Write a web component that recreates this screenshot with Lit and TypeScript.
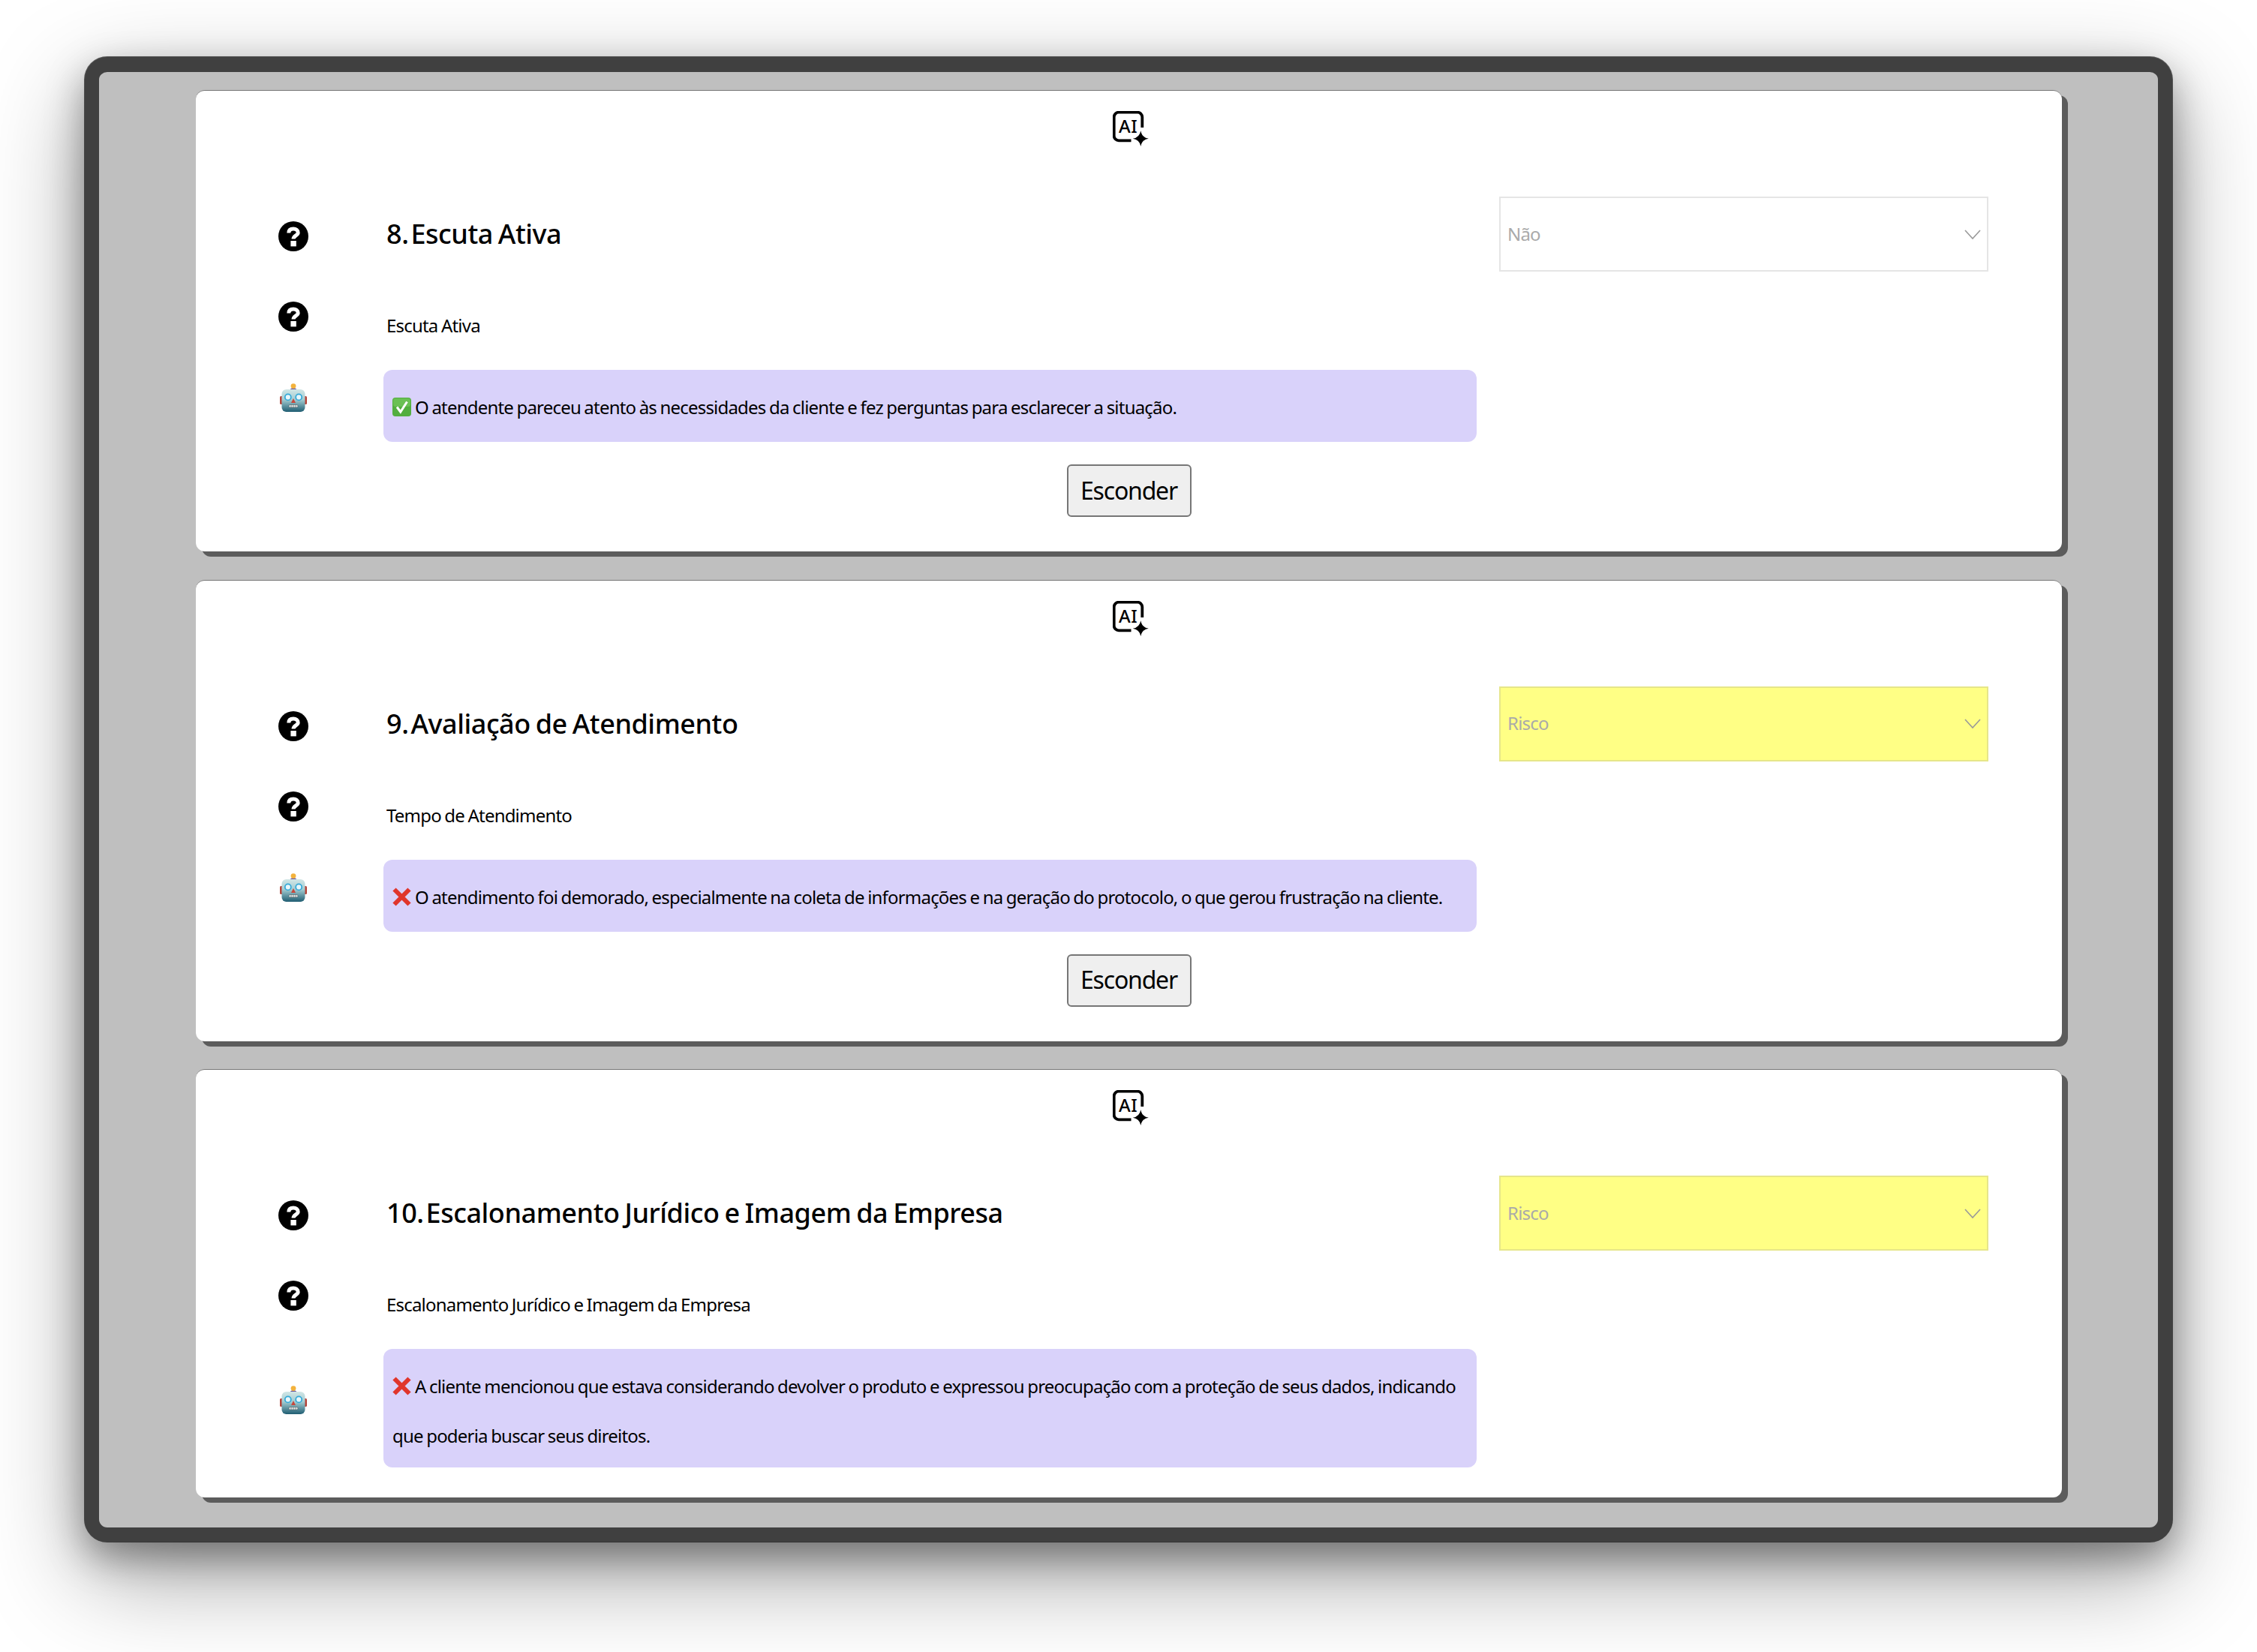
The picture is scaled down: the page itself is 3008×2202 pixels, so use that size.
import { LitElement, html, css, svg } from "lit";
import { customElement } from "lit/decorators.js";

interface Section {
  num: string;
  title: string;
  label: string;
  mark: "ok" | "no";
  text: string;
  value: string;
  risk: boolean;
  hide: boolean;
}

const sections: Section[] = [
  {
    num: "8.",
    title: "Escuta Ativa",
    label: "Escuta Ativa",
    mark: "ok",
    text: "O atendente pareceu atento às necessidades da cliente e fez perguntas para esclarecer a situação.",
    value: "Não",
    risk: false,
    hide: true,
  },
  {
    num: "9.",
    title: "Avaliação de Atendimento",
    label: "Tempo de Atendimento",
    mark: "no",
    text: "O atendimento foi demorado, especialmente na coleta de informações e na geração do protocolo, o que gerou frustração na cliente.",
    value: "Risco",
    risk: true,
    hide: true,
  },
  {
    num: "10.",
    title: "Escalonamento Jurídico e Imagem da Empresa",
    label: "Escalonamento Jurídico e Imagem da Empresa",
    mark: "no",
    text: "A cliente mencionou que estava considerando devolver o produto e expressou preocupação com a proteção de seus dados, indicando que poderia buscar seus direitos.",
    value: "Risco",
    risk: true,
    hide: false,
  },
];

const aiIcon = html`<svg class="ai" viewBox="0 0 48 47" width="48" height="47">
  <path d="M24.5 39.3H8A6.3 6.3 0 0 1 1.7 33V8A6.3 6.3 0 0 1 8 1.7H33A6.3 6.3 0 0 1 39.3 8V22" fill="none" stroke="#000" stroke-width="3.8" />
  <text x="8" y="29" font-size="24" font-weight="500" letter-spacing="0.5" font-family="Noto Sans, sans-serif">AI</text>
  <path d="M37.3 26.2Q38.8 35.2 47.8 36.7Q38.8 38.2 37.3 47Q35.8 38.2 26.8 36.7Q35.8 35.2 37.3 26.2Z" />
</svg>`;

const helpIcon = html`<svg viewBox="0 0 40 40" width="40" height="40">
  <circle cx="20" cy="20" r="20" />
  <path d="M13.8 15.5C13.8 11.5 16.6 10 20 10C23.6 10 26.2 12 26.2 15.2C26.2 18.8 20 19 20 23.5" fill="none" stroke="#fff" stroke-width="5" />
  <rect x="16.4" y="26" width="7.4" height="7.4" fill="#fff" />
</svg>`;

const robotIcon = html`<svg viewBox="0 0 36 38" width="36" height="38">
  <defs>
    <linearGradient id="head" x1="0" y1="0" x2="0" y2="1">
      <stop offset="0" stop-color="#d2e6e6" />
      <stop offset="0.45" stop-color="#a3cdd2" />
      <stop offset="1" stop-color="#1f5d72" />
    </linearGradient>
  </defs>
  <rect x="0" y="17" width="4" height="11" rx="1.5" fill="#b5443a" />
  <rect x="32" y="17" width="4" height="11" rx="1.5" fill="#b5443a" />
  <path d="M14 8C14 5.5 22 5.5 22 8V9H14Z" fill="#6a5a9c" />
  <circle cx="18" cy="3.6" r="3.4" fill="#f3b23c" />
  <rect x="2.5" y="8" width="31" height="30" rx="6" fill="url(#head)" />
  <circle cx="10.8" cy="18.4" r="4" fill="#e8f7fb" stroke="#35a9d8" stroke-width="1.8" />
  <circle cx="25.2" cy="18.4" r="4" fill="#e8f7fb" stroke="#35a9d8" stroke-width="1.8" />
  <path d="M18 20L21 26H15Z" fill="#c8483c" />
  <rect x="12" y="28.5" width="12" height="3.6" rx="1.6" fill="#dfe6e6" stroke="#4a5a60" stroke-width="0.6" />
  <path d="M15 28.5V32M18 28.5V32M21 28.5V32" stroke="#4a5a60" stroke-width="0.6" />
</svg>`;

const okMark = svg`<rect width="25" height="25" rx="4" fill="#52ae3f" /><rect x="1" y="1" width="23" height="11" rx="3" fill="#7ccb62" opacity="0.6" />
  <path d="M6 12.5L10.8 19L19.5 5.5" fill="none" stroke="#fff" stroke-width="3" />`;
const noMark = svg`<path d="M2.5 2.5L22.5 22.5M22.5 2.5L2.5 22.5" fill="none" stroke="#e0352b" stroke-width="6" />`;

@customElement("app-root")
export class AppRoot extends LitElement {
  static styles = css`
    :host {
      display: block;
      font-family: "Noto Sans", sans-serif;
      color: #000;
      padding: 76px 113px 148px;
      background: #fff;
    }
    .frame {
      border: 19px solid #404040;
      border-top-width: 20px;
      border-radius: 30px;
      background: #bfbfbf;
      padding: 24px 128px 40px 129px;
      box-shadow: 0 20px 50px rgba(0, 0, 0, 0.36), 0 44px 130px rgba(0, 0, 0, 0.38), 0 0 0 1px rgba(0, 0, 0, 0.6);
    }
    .card {
      background: #fff;
      border-top: 1px solid #777;
      border-radius: 12px;
      box-shadow: 8px 7px 0 #5c5c5c;
      padding: 27px 0 46px;
      margin-bottom: 37.5px;
    }
    .card:last-child {
      margin-bottom: 0;
      padding-bottom: 40px;
    }
    .top {
      display: flex;
      justify-content: center;
      height: 47px;
      margin-bottom: 67px;
      padding-left: 5px;
    }
    .row {
      display: grid;
      grid-template-columns: 140px 1457px 682px;
      padding-left: 110px;
    }
    .icon {
      display: flex;
      justify-content: center;
      width: 40px;
    }
    .head {
      height: 100px;
      align-items: center;
    }
    .head .icon {
      margin-top: 6px;
    }
    h2 {
      margin: 0 0 0 4px;
      font-size: 36px;
      font-weight: 500;
      line-height: 50px;
      letter-spacing: -0.45px;
      word-spacing: -2px;
    }
    h2 .num {
      margin-right: -4px;
    }
    .select {
      box-sizing: border-box;
      height: 100px;
      margin-left: 30px;
      display: flex;
      align-items: center;
      justify-content: space-between;
      border: 2px solid #e5e5e5;
      padding: 0 8px 2px 9px;
      font-size: 24px;
      color: #aaa;
      letter-spacing: -0.8px;
    }
    .select svg {
      margin-top: 2px;
    }
    .select.risk {
      background: #ffff85;
      border-color: #e6e68a;
    }
    .sub {
      margin-top: 40px;
      height: 91px;
    }
    .sub p {
      margin: 0 0 0 4px;
      font-size: 24px;
      line-height: 64px;
      letter-spacing: -0.8px;
      word-spacing: -1px;
    }
    .note .icon {
      align-self: center;
      margin-bottom: 22px;
    }
    .box {
      box-sizing: border-box;
      min-height: 96px;
      background: #d9d2fa;
      border-radius: 12px;
      padding: 17px 12px 9px;
      font-size: 24px;
      line-height: 66px;
      letter-spacing: -0.8px;
      word-spacing: -1px;
    }
    .mark {
      margin-right: 5px;
      vertical-align: -3px;
    }
    .actions {
      display: flex;
      justify-content: center;
      margin-top: 30px;
    }
    button {
      box-sizing: border-box;
      width: 166px;
      height: 70px;
      padding: 0 0 2px;
      border: 2px solid #767676;
      border-radius: 6px;
      background: #efefef;
      color: #000;
      font-family: inherit;
      font-size: 32px;
      letter-spacing: -1.2px;
    }
  `;

  renderSection(s: Section) {
    return html`
      <section class="card">
        <div class="top">${aiIcon}</div>
        <div class="row head">
          <div class="icon">${helpIcon}</div>
          <h2><span class="num">${s.num}</span> ${s.title}</h2>
          <div class="select ${s.risk ? "risk" : ""}">
            <span>${s.value}</span>
            <svg viewBox="0 0 22 13" width="22" height="13"><path d="M1 1L11 12L21 1" fill="none" stroke="#999" stroke-width="1.6" /></svg>
          </div>
        </div>
        <div class="row sub">
          <div class="icon">${helpIcon}</div>
          <p>${s.label}</p>
        </div>
        <div class="row note">
          <div class="icon">${robotIcon}</div>
          <div class="box"><svg class="mark" viewBox="0 0 25 25" width="25" height="25">${s.mark === "ok" ? okMark : noMark}</svg>${s.text}</div>
        </div>
        ${s.hide ? html`<div class="actions"><button>Esconder</button></div>` : ""}
      </section>
    `;
  }

  render() {
    return html`<div class="frame">${sections.map((s) => this.renderSection(s))}</div>`;
  }
}
